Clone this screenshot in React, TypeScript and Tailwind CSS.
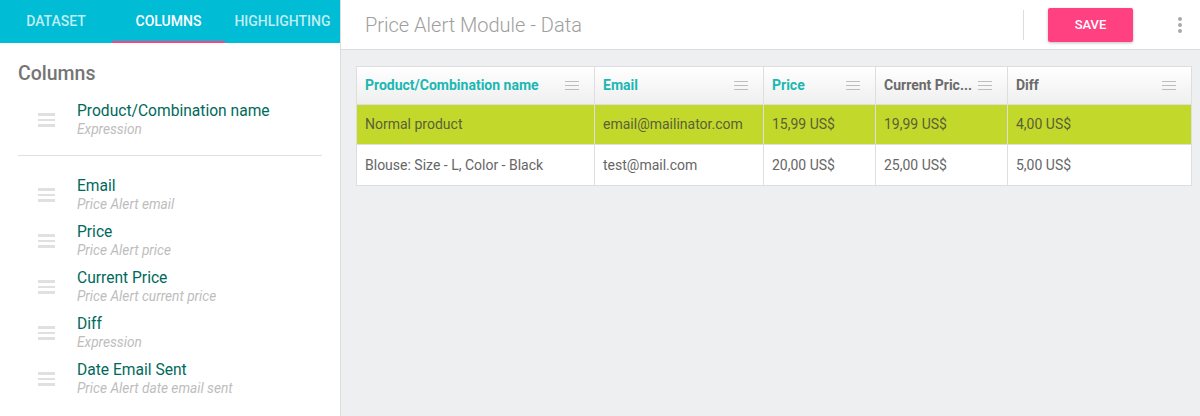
import React from 'react';

const columns = [
  { title: 'Product/Combination name', sub: 'Expression' },
  { title: 'Email', sub: 'Price Alert email' },
  { title: 'Price', sub: 'Price Alert price' },
  { title: 'Current Price', sub: 'Price Alert current price' },
  { title: 'Diff', sub: 'Expression' },
  { title: 'Date Email Sent', sub: 'Price Alert date email sent' },
];

const gridCols = [
  { label: 'Product/Combination name', w: 'w-[238px]', accent: true },
  { label: 'Email', w: 'w-[169px]', accent: true },
  { label: 'Price', w: 'w-[112px]', accent: true },
  { label: 'Current Pric...', w: 'w-[132px]', accent: false },
  { label: 'Diff', w: 'flex-1', accent: false },
];

const rows = [
  { cells: ['Normal product', 'email@mailinator.com', '15,99 US$', '19,99 US$', '4,00 US$'], highlight: true },
  { cells: ['Blouse: Size - L, Color - Black', 'test@mail.com', '20,00 US$', '25,00 US$', '5,00 US$'], highlight: false },
];

function DragHandle() {
  return (
    <div className="flex w-[17px] flex-col gap-[3px]">
      <span className="h-[2.5px] bg-[#e0e0e0]" />
      <span className="h-[2.5px] bg-[#e0e0e0]" />
      <span className="h-[2.5px] bg-[#e0e0e0]" />
    </div>
  );
}

function MenuLines() {
  return (
    <div className="flex w-[14px] flex-col gap-[3px]">
      <span className="h-px bg-[#bdbdbd]" />
      <span className="h-px bg-[#bdbdbd]" />
      <span className="h-px bg-[#bdbdbd]" />
    </div>
  );
}

function ColumnItem({ title, sub }: { title: string; sub: string }) {
  return (
    <div className="flex items-center">
      <div className="flex w-[77px] justify-start pl-[38px] pt-[2px]">
        <DragHandle />
      </div>
      <div>
        <div className="text-[15.6px] leading-[20px] text-[#00695c]">{title}</div>
        <div className="text-[13.7px] leading-[16px] italic text-[#bdbdbd]">{sub}</div>
      </div>
    </div>
  );
}

export default function App() {
  return (
    <div className="flex h-[416px] w-[1200px] overflow-hidden bg-[#eeeff1] font-['Roboto',sans-serif]">
      {/* Sidebar */}
      <aside className="w-[341px] shrink-0 border-r border-[#dcdcdc] bg-white">
        <div className="flex h-[43px] bg-[#00bcd4] text-[14px] font-medium uppercase">
          <div className="flex w-[112px] items-center justify-center text-white/75">Dataset</div>
          <div className="flex w-[113px] items-center justify-center border-b-2 border-[#ff4081] pt-[1px] text-white">Columns</div>
          <div className="flex flex-1 items-center justify-center text-white/75">Highlighting</div>
        </div>
        <div className="px-[18px] pt-[19px]">
          <h2 className="text-[19.5px] font-medium leading-[24px] text-[#757575]">Columns</h2>
        </div>
        <div className="mt-[15px]">
          <ColumnItem title={columns[0].title} sub={columns[0].sub} />
        </div>
        <div className="mx-[18px] mt-[18px] border-t border-[#e0e0e0]" />
        <div className="mt-[20px] flex flex-col gap-[10px]">
          {columns.slice(1).map((c) => (
            <ColumnItem key={c.title} title={c.title} sub={c.sub} />
          ))}
        </div>
      </aside>

      {/* Main */}
      <main className="flex flex-1 flex-col">
        <header className="flex h-[50px] items-center border-b border-[#dcdcdc] bg-white pl-[24px] pr-[18px]">
          <h1 className="flex-1 text-[20px] font-light text-[#9e9e9e]">Price Alert Module - Data</h1>
          <div className="h-[30px] w-px bg-[#dcdcdc]" />
          <button className="ml-[24px] h-[34px] w-[85px] rounded-[2px] bg-[#ff4081] text-[13px] font-medium text-white shadow-[0_1px_3px_rgba(0,0,0,0.25)]">
            SAVE
          </button>
          <div className="ml-[45px] flex flex-col gap-[2px]">
            <span className="h-[4px] w-[4px] rounded-full bg-[#a8a8a8]" />
            <span className="h-[4px] w-[4px] rounded-full bg-[#a8a8a8]" />
            <span className="h-[4px] w-[4px] rounded-full bg-[#a8a8a8]" />
          </div>
        </header>

        <div className="pl-[15px] pr-[8px] pt-[16px]">
          <div className="border border-[#dedede] bg-white text-[14px]">
            <div className="flex h-[38px] border-b border-[#dedede] bg-gradient-to-b from-white to-[#efefef]">
              {gridCols.map((c, i) => (
                <div
                  key={c.label}
                  className={`${c.w} flex items-center justify-between pl-[8px] pr-[15px] ${i < gridCols.length - 1 ? 'border-r border-[#dedede]' : ''}`}
                >
                  <span className={`font-bold ${c.accent ? 'text-[#1bb8b3]' : 'text-[#6b6b6b]'}`}>{c.label}</span>
                  <MenuLines />
                </div>
              ))}
            </div>
            {rows.map((r, ri) => (
              <div
                key={ri}
                className={`flex h-[40px] ${ri === 0 ? 'border-b border-[#dedede] bg-[#c2d92c] text-[#5b5f38]' : 'bg-white text-[#666]'}`}
              >
                {r.cells.map((cell, i) => (
                  <div
                    key={i}
                    className={`${gridCols[i].w} flex items-center pl-[8px] ${i < r.cells.length - 1 ? 'border-r border-[#dedede]' : ''}`}
                  >
                    {cell}
                  </div>
                ))}
              </div>
            ))}
          </div>
        </div>
      </main>
    </div>
  );
}
